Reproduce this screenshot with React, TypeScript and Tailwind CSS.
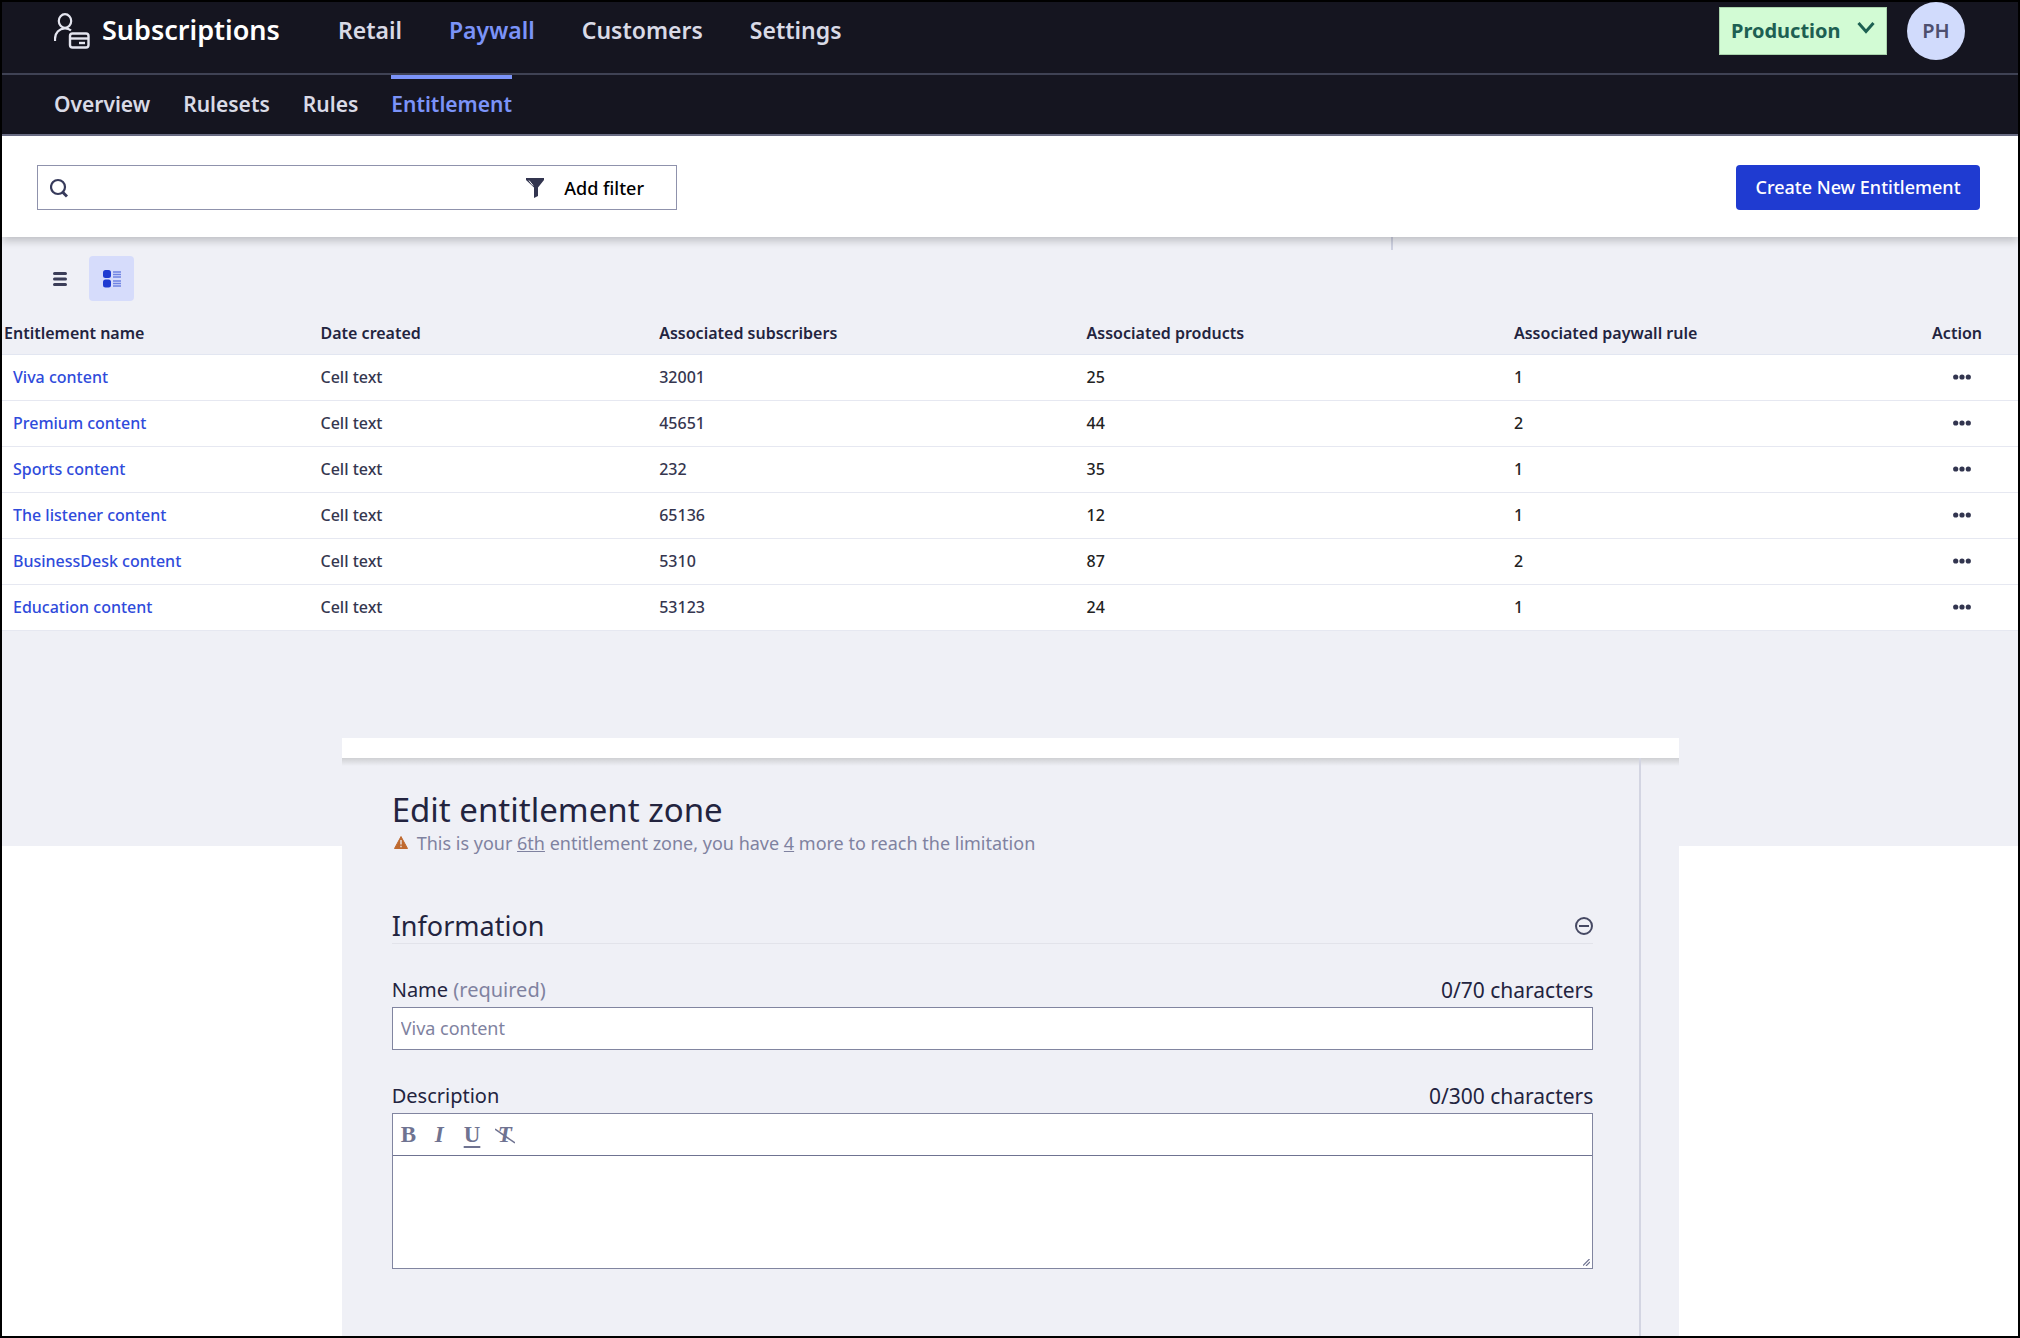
import React, { useState } from "react";

const mainNav = ["Retail", "Paywall", "Customers", "Settings"];
const subNav = ["Overview", "Rulesets", "Rules", "Entitlement"];

const entitlements = [
  { name: "Viva content", subscribers: "32001", products: "25", rules: "1" },
  { name: "Premium content", subscribers: "45651", products: "44", rules: "2" },
  { name: "Sports content", subscribers: "232", products: "35", rules: "1" },
  { name: "The listener content", subscribers: "65136", products: "12", rules: "1" },
  { name: "BusinessDesk content", subscribers: "5310", products: "87", rules: "2" },
  { name: "Education content", subscribers: "53123", products: "24", rules: "1" },
];

function SubscriptionsLogo() {
  return (
    <svg width="36" height="36" viewBox="0 0 36 36" fill="none" stroke="#e4e5ef" strokeWidth="2.200">
      <ellipse cx="11" cy="8" rx="6.2" ry="6.800" />
      <path d="M1 28V26c0-6 4-10.500 10-10.500 2.500 0 4.500.6 6 2" />
      <rect x="16" y="20.500" width="18.500" height="14" rx="2.500" strokeWidth="2.400" />
      <path d="M16 25.500h19" strokeWidth="2.400" />
      <path d="M25 30h6" strokeWidth="2.400" />
    </svg>
  );
}

function SearchIcon() {
  return (
    <svg width="18" height="20" viewBox="0 0 18 20" fill="none" stroke="#373a5b" strokeWidth="2.200">
      <circle cx="8" cy="9" r="7" />
      <path d="M12 13.500l5 5" strokeWidth="3" />
    </svg>
  );
}

function FilterIcon() {
  return (
    <svg width="18" height="20" viewBox="0 0 18 20" fill="#32354f">
      <path d="M0 0h18v2l-6 7.500V18l-4 2V9.500L0 2z" />
      <path d="M3 2.500l4 5" stroke="#fff" strokeWidth="1" />
    </svg>
  );
}

function ListIcon() {
  return (
    <svg width="14" height="16" viewBox="0 0 14 16" stroke="#3b3d58" strokeWidth="3" strokeLinecap="round">
      <path d="M1.500 2.500h11M1.500 8h11M1.500 13.500h11" />
    </svg>
  );
}

function DetailIcon() {
  return (
    <svg width="18" height="18" viewBox="0 0 18 18" fill="#1f3bd1">
      <rect x="0" y="0" width="8" height="8" rx="2.500" />
      <rect x="0" y="9.500" width="8" height="8" rx="2.500" />
      <path d="M10 2h8M10 4.500h8M10 7h8M10 11h8M10 13.500h8M10 16h8" stroke="#6f83e2" strokeWidth="1.600" />
    </svg>
  );
}

function DotsIcon() {
  return (
    <svg width="18" height="6" viewBox="0 0 18 6" fill="#32354f">
      <circle cx="2.700" cy="3" r="2.600" />
      <circle cx="9" cy="3" r="2.600" />
      <circle cx="15.300" cy="3" r="2.600" />
    </svg>
  );
}

function TopBar() {
  const [active, setActive] = useState("Paywall");
  return (
    <div className="flex items-center border-b-2 border-[#3f4254] pr-[53px] pb-[13px] pl-[52px]">
      <a href="#home" className="flex items-center gap-3 text-[27px] leading-8 font-semibold text-white">
        <SubscriptionsLogo />
        <span className="pb-[2px]">Subscriptions</span>
      </a>
      <nav className="ml-[58px] flex gap-[47px] pb-[3px] text-[23px] leading-7 font-semibold">
        {mainNav.map((item) => (
          <a
            key={item}
            href={`#${item.toLowerCase()}`}
            onClick={() => setActive(item)}
            className={active === item ? "text-[#7b93f8]" : "text-[#d9dae6]"}
          >
            {item}
          </a>
        ))}
      </nav>
      <div className="ml-auto flex items-center gap-5">
        <div className="relative">
          <select
            aria-label="Environment"
            className="h-12 w-[168px] appearance-none border border-[#a9d3ac] bg-[#d2fbd4] pl-[11px] text-[20px] font-bold text-[#1d6052]"
          >
            <option>Production</option>
          </select>
          <svg
            className="pointer-events-none absolute top-[14px] right-3"
            width="18"
            height="14"
            viewBox="0 0 18 14"
            fill="none"
            stroke="#1d6052"
            strokeWidth="3"
          >
            <path d="M1.500 2l7.500 8.500L16.500 2" />
          </svg>
        </div>
        <button className="h-[58px] w-[58px] rounded-full bg-[#d1dbfc] text-[20px] font-semibold text-[#4d4f6e]">
          PH
        </button>
      </div>
    </div>
  );
}

function SubBar() {
  const [active, setActive] = useState("Entitlement");
  return (
    <nav className="flex gap-[33px] border-b-2 border-[#6b6e86] pl-[52px] text-[21px] leading-[28px] font-semibold">
      {subNav.map((item) => (
        <a
          key={item}
          href={`#${item.toLowerCase()}`}
          onClick={() => setActive(item)}
          className={`border-t-4 pt-[11px] pb-4 ${
            active === item ? "border-[#7b93f8] text-[#7b93f8]" : "border-transparent text-[#d9dae6]"
          }`}
        >
          {item}
        </a>
      ))}
    </nav>
  );
}

function Toolbar() {
  return (
    <div className="relative flex items-center justify-between bg-white pt-[29px] pr-[38px] pb-[27px] pl-[35px] shadow-[0_4px_8px_rgba(0,0,0,0.2)]">
      <div className="flex h-[45px] w-[640px] items-center border border-[#8f92ac] pr-8 pl-3">
        <SearchIcon />
        <input aria-label="Search" className="min-w-0 flex-1 px-3 text-[18px] outline-none" />
        <button className="flex items-center gap-5 text-[18px] leading-6 font-medium text-black">
          <FilterIcon />
          Add filter
        </button>
      </div>
      <button className="h-[45px] w-[244px] rounded bg-[#1f3bd1] pb-[2px] text-[18px] leading-6 font-medium text-white">
        Create New Entitlement
      </button>
    </div>
  );
}

function EntitlementTable() {
  return (
    <table className="w-full table-fixed text-left text-[16px] leading-6 font-medium text-[#35364f]">
      <colgroup>
        <col className="w-[15.8%]" />
        <col className="w-[16.8%]" />
        <col className="w-[21.2%]" />
        <col className="w-[21.2%]" />
        <col />
        <col className="w-[120px]" />
      </colgroup>
      <thead className="text-[#23243f]">
        <tr className="h-[42px] border-b border-[#e2e6f1]">
          <th className="pl-[2px] font-semibold">Entitlement name</th>
          <th className="font-semibold">Date created</th>
          <th className="font-semibold">Associated subscribers</th>
          <th className="font-semibold">Associated products</th>
          <th className="font-semibold">Associated paywall rule</th>
          <th className="pr-[36px] text-right font-semibold">Action</th>
        </tr>
      </thead>
      <tbody>
        {entitlements.map((row) => (
          <tr key={row.name} className="h-[46px] border-b border-[#e6e8f1] bg-white">
            <td className="pl-[11px]">
              <a href="#edit" className="text-[#2f4bdb]">
                {row.name}
              </a>
            </td>
            <td>Cell text</td>
            <td>{row.subscribers}</td>
            <td className="text-[#222222]">{row.products}</td>
            <td className="text-[#222222]">{row.rules}</td>
            <td className="pr-[47px]">
              <button aria-label={`Actions for ${row.name}`} className="ml-auto block">
                <DotsIcon />
              </button>
            </td>
          </tr>
        ))}
      </tbody>
    </table>
  );
}

function EditPanel() {
  const toolButton = "flex h-6 items-center";
  return (
    <section className="relative mr-[16.8%] -mt-[108px] ml-[16.85%] flex flex-1 flex-col bg-[#eff0f6]">
      <div className="h-5 bg-white" />
      <div className="h-2 bg-linear-to-b from-[#cfd0d3] to-[#eff0f6]" />
      <div className="-mt-2 mr-[38px] flex-1 border-r-2 border-[#d3d5e2] pt-[29px] pr-[46px] pb-[66px] pl-[50px] text-[#23243f]">
        <h1 className="text-[33px] leading-[46px]">Edit entitlement zone</h1>
        <p className="flex items-center gap-[9px] pl-[2px] text-[18px] leading-5 text-[#7f82a0]">
          <svg width="14" height="13" viewBox="0 0 14 13" fill="#bf6a30">
            <path d="M7 0.500L13.500 12.500H0.500z" stroke="#bf6a30" strokeLinejoin="round" />
            <path d="M7 4v4.500M7 9.700v1.500" stroke="#eff0f6" strokeWidth="1.300" />
          </svg>
          <span>
            This is your <span className="underline">6th</span> entitlement zone, you have{" "}
            <span className="underline">4</span> more to reach the limitation
          </span>
        </p>

        <div className="mt-[57px] flex items-center justify-between border-b border-[#e2e3ea] pb-px">
          <h2 className="text-[27px] leading-8">Information</h2>
          <button aria-label="Collapse">
            <svg width="18" height="18" viewBox="0 0 18 18" fill="none" stroke="#464963" strokeWidth="2">
              <circle cx="9" cy="9" r="8" />
              <path d="M4 9h10" />
            </svg>
          </button>
        </div>

        <div className="mt-[32px] flex justify-between text-[20px] leading-7">
          <label htmlFor="name">
            Name <span className="text-[#7f82a0]">(required)</span>
          </label>
          <span className="text-[21px]">0/70 characters</span>
        </div>
        <input
          id="name"
          placeholder="Viva content"
          className="mt-[3px] block h-[43px] w-full border border-[#8185a0] bg-white px-2 text-[18px] placeholder:text-[#7f82a0]"
        />

        <div className="mt-[32px] flex justify-between text-[20px] leading-7">
          <label htmlFor="description">Description</label>
          <span className="text-[21px]">0/300 characters</span>
        </div>
        <div className="relative mt-[3px] border border-[#8185a0] bg-white">
          <div className="flex items-center border-b border-[#6f7391] px-2 pt-[9px] pb-2 font-['Liberation_Serif',serif] text-[23px] leading-6 font-bold text-[#6f7391]">
            <button className={`${toolButton} w-[34px]`}>B</button>
            <button className={`${toolButton} w-[29px] italic`}>I</button>
            <button className={`${toolButton} w-[34px] underline underline-offset-4`}>U</button>
            <button className={`${toolButton} relative italic`} aria-label="Clear formatting">
              T
              <svg
                className="absolute top-[5px] -left-[3px]"
                width="20"
                height="16"
                viewBox="0 0 20 16"
                stroke="#6f7391"
                strokeWidth="1.500"
              >
                <path d="M0 1l20 14" />
              </svg>
            </button>
          </div>
          <textarea
            id="description"
            className="block h-28 w-full resize-none p-2 text-[18px] outline-none"
          />
          <svg
            className="absolute right-[2px] bottom-[2px]"
            width="7"
            height="7"
            viewBox="0 0 7 7"
            stroke="#6f7391"
            strokeWidth="1.200"
          >
            <path d="M0 6.500L6.500 0M3 7l4-4" />
          </svg>
        </div>
      </div>
    </section>
  );
}

export default function App() {
  return (
    <div className="flex min-h-screen flex-col border-2 border-black bg-white font-['Noto_Sans',sans-serif]">
      <header className="bg-[#151520]">
        <TopBar />
        <SubBar />
      </header>
      <Toolbar />
      <main className="bg-[#eff0f6] pb-[215px]">
        <div className="ml-[68.9%] h-[13px] w-[2px] bg-[#cdd0e0]" />
        <div className="flex items-center gap-[22px] pt-[6px] pb-[11px] pl-[51px]">
          <button aria-label="List view">
            <ListIcon />
          </button>
          <button
            aria-label="Detail view"
            className="flex h-[45px] w-[45px] items-center justify-center rounded bg-[#d6dcfb]"
          >
            <DetailIcon />
          </button>
        </div>
        <EntitlementTable />
      </main>
      <EditPanel />
    </div>
  );
}
